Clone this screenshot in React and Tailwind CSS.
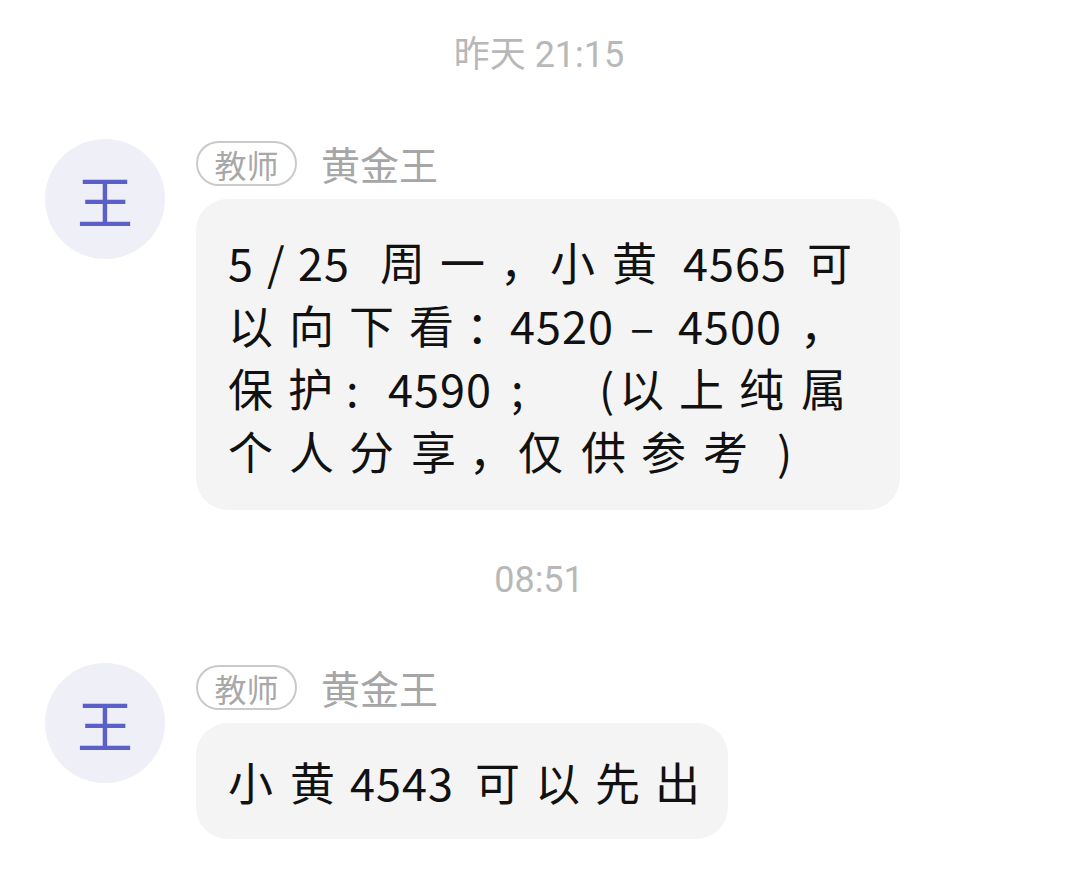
import React from 'react';

const FONT = "font-['Noto_Sans_CJK_SC','Noto_Sans',sans-serif]";

const msg1 = [
  [['5', 'w-[39px]'], ['/', 'w-[31px]'], ['25', 'w-[82px] tracking-[1px]'], ['周', 'w-[60px]'], ['一', 'w-[60px]'], ['，', 'w-[50px]'], ['小', 'w-[62px]'], ['黄', 'w-[71px]'], ['4565', 'w-[124px] tracking-[1px]'], ['可', '']],
  [['以', 'w-[61px]'], ['向', 'w-[60px]'], ['下', 'w-[60px]'], ['看', 'w-[57px]'], ['：', 'w-[44px]'], ['4520', 'w-[120px] tracking-[1px]'], ['–', 'w-[48px]'], ['4500', 'w-[122px] tracking-[1px]'], ['，', '']],
  [['保', 'w-[60px]'], ['护', 'w-[58px]'], [':', 'w-[42px]'], ['4590', 'w-[123px] tracking-[1px]'], [';', 'w-[88px]'], ['(', 'w-[20px]'], ['以', 'w-[60px]'], ['上', 'w-[60px]'], ['纯', 'w-[62px]'], ['属', '']],
  [['个', 'w-[61px]'], ['人', 'w-[60px]'], ['分', 'w-[62px]'], ['享', 'w-[58px]'], ['，', 'w-[49px]'], ['仅', 'w-[63px]'], ['供', 'w-[60px]'], ['参', 'w-[62px]'], ['考', 'w-[74px]'], [')', '']],
];

const msg2 = [
  [['小', 'w-[62px]'], ['黄', 'w-[60px]'], ['4543', 'w-[125px] tracking-[1px]'], ['可', 'w-[60px]'], ['以', 'w-[60px]'], ['先', 'w-[60px]'], ['出', '']],
];

function Line({ tokens }) {
  return (
    <div className="flex whitespace-nowrap leading-[63px] h-[63px]">
      {tokens.map(([t, cls], i) => (
        <span key={i} className={`shrink-0 ${cls}`}>{t}</span>
      ))}
    </div>
  );
}

function Stamp({ text, className }) {
  return (
    <div className={`h-[40px] flex items-center justify-center text-[36px] text-[#b8b8b8] font-['Roboto','Noto_Sans_CJK_SC',sans-serif] ${className}`}>
      {text}
    </div>
  );
}

function Message({ lines, width, pad, className }) {
  return (
    <div className={`flex items-start gap-[31px] ${className}`}>
      <div className="w-[120px] h-[120px] rounded-full bg-[#efeff8] flex items-center justify-center shrink-0">
        <span className={`text-[56px] leading-none text-[#5a60c8] ${FONT}`}>王</span>
      </div>
      <div className="pt-[2px] flex flex-col">
        <div className="flex items-center h-[45px]">
          <div className="h-[45px] w-[101px] rounded-full border-2 border-[#cacaca] flex items-center justify-center text-[32px] text-[#a8a8a8] leading-none">
            教师
          </div>
          <div className="ml-[24px] text-[39px] text-[#a6a6a6] leading-none">黄金王</div>
        </div>
        <div className={`${width} ${pad} mt-[13px] rounded-[32px] bg-[#f4f4f4] pl-[32px] text-[45px] text-[#111]`}>
          {lines.map((l, i) => (
            <Line key={i} tokens={l} />
          ))}
        </div>
      </div>
    </div>
  );
}

export default function App() {
  return (
    <div className={`w-[1078px] h-[885px] bg-white overflow-hidden pl-[45px] ${FONT}`}>
      <Stamp text="昨天 21:15" className="mt-[35px] pr-[45px]" />
      <Message lines={msg1} width="w-[704px]" pad="pt-[31px] pb-[28px]" className="mt-[64px]" />
      <Stamp text="08:51" className="mt-[50px] pr-[45px]" />
      <Message lines={msg2} width="w-[532px]" pad="pt-[27px] pb-[26px]" className="mt-[63px]" />
    </div>
  );
}
